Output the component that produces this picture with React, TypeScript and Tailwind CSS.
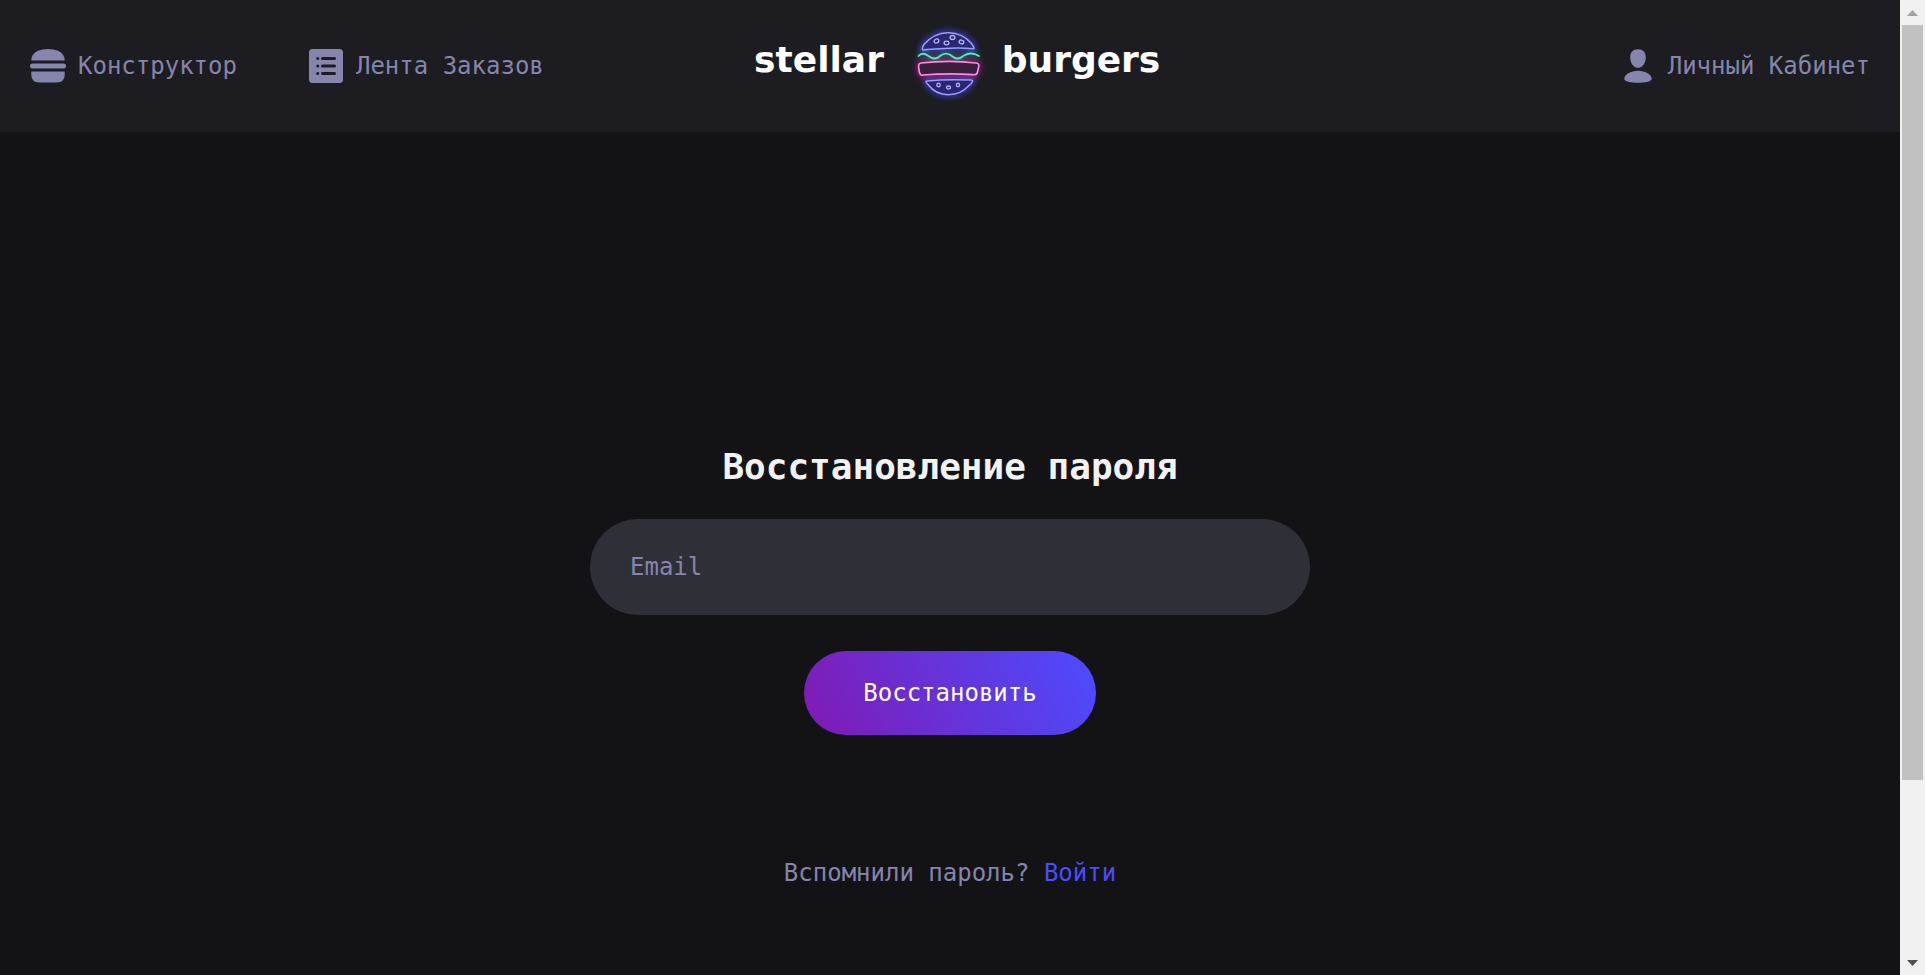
import React from "react";

function BurgerIcon() {
  return (
    <svg className="size-9" viewBox="0 0 36 36" fill="#8585AD" aria-hidden="true">
      <path d="M18 1C9 1 1.3 4.400 1.300 12.600H34.700C34.700 4.400 27 1 18 1Z" />
      <rect x="0" y="15.500" width="36" height="5" rx="2.500" />
      <path d="M1.300 23.500H34.700V26.500Q34.700 34.500 26.500 34.500H9.500Q1.300 34.500 1.300 26.500Z" />
    </svg>
  );
}

function ListIcon() {
  return (
    <svg className="size-9" viewBox="0 0 36 36" aria-hidden="true">
      <rect x="1" y="1" width="34" height="34" rx="3.500" fill="#8585AD" />
      <g stroke="#1C1C21" strokeWidth="3" strokeLinecap="round">
        <path d="M9.700 10.500h.1M14.500 10.500h12M9.700 18h.1M14.500 18h12M9.700 25.500h.1M14.500 25.500h12" />
      </g>
    </svg>
  );
}

function ProfileIcon() {
  return (
    <svg className="size-9" viewBox="0 0 36 36" fill="#8585AD" aria-hidden="true">
      <path d="M18 1.200c5 0 7.800 3 7.800 8 0 6-3.400 10.600-7.800 10.600S10.200 15.200 10.200 9.200c0-5 2.800-8 7.800-8Z" />
      <path d="M18 22.700c7.500 0 13.700 4 13.700 8 0 2.600-6 4-13.700 4s-13.700-1.400-13.700-4c0-4 6.200-8 13.700-8Z" />
    </svg>
  );
}

function NeonBurger() {
  return (
    <svg className="h-20 w-[78px] shrink-0" viewBox="1 0 78 80" fill="none" aria-hidden="true">
      <defs>
        <filter id="glow" x="-30%" y="-30%" width="160%" height="160%">
          <feGaussianBlur stdDeviation="3" />
        </filter>
        <g id="bun">
          <path d="M13 26C11.500 25.500 12.500 23 14 20.500C27 5 49 5 61 19C63 22 65 24.500 63.500 24.800C46 22.500 29 24.500 13 26Z" />
          <path d="M17 57C31 55.500 49 55.500 61 56C64 56 62 59 59.500 61C48 74 28 74 18 60.500C15.500 58 15.500 57 17 57Z" />
        </g>
        <path id="lettuce" d="M8.500 32C11 29 15 29.500 18.500 32C23 35.500 27 35 30 32C34 28.500 39 29 42.500 32.500C46 35.500 50 35 54 31.500C59 28.500 64 29 69 32" />
        <path id="patty" d="M11 39C29 37 49 37 66 39C69 39.500 69 40.500 68.800 42C68.500 44 68 46.500 67.300 48.500C66.800 50.500 65.500 51 63 50.700C46 49.400 29 49.700 13 51C10.500 51.500 9.500 50 9 46C8.300 42.500 8 39.500 11 39Z" />
      </defs>
      <g filter="url(#glow)" strokeWidth="4">
        <use href="#bun" stroke="#4242DE" />
        <use href="#lettuce" stroke="#008C86" strokeOpacity=".6" />
        <use href="#patty" stroke="#C31DA0" strokeOpacity=".8" />
      </g>
      <use href="#bun" fill="#292770" stroke="#9C9CFF" strokeWidth="1.500" />
      <g stroke="#B5B5FF" strokeWidth="1.300">
        <ellipse cx="26.500" cy="17" rx="2.400" ry="1.900" transform="rotate(-25 26.500 17)" />
        <ellipse cx="36.500" cy="19" rx="2.400" ry="1.800" />
        <ellipse cx="42.500" cy="13.500" rx="2.400" ry="2" />
        <ellipse cx="51.500" cy="18" rx="2.400" ry="1.800" transform="rotate(20 51.500 18)" />
        <ellipse cx="28.500" cy="61" rx="1.700" ry="1.800" />
        <ellipse cx="38.500" cy="63.500" rx="2" ry="1.500" />
        <ellipse cx="48" cy="61" rx="1.600" ry="1.800" />
      </g>
      <use href="#lettuce" stroke="#55E8D0" strokeWidth="1.800" strokeLinecap="round" />
      <use href="#patty" fill="#3B1D3C" stroke="#FF8ADF" strokeWidth="1.700" />
    </svg>
  );
}

function NavLink({ icon, children }: { icon: React.ReactNode; children: React.ReactNode }) {
  return (
    <a href="#" className="flex items-center gap-3 whitespace-nowrap">
      {icon}
      <span>{children}</span>
    </a>
  );
}

function Header() {
  return (
    <header className="grid grid-cols-[1fr_auto_1fr] items-center bg-[#1c1c21] px-[30px] py-6 text-[#8585ad]">
      <nav className="flex gap-[71px]">
        <NavLink icon={<BurgerIcon />}>Конструктор</NavLink>
        <NavLink icon={<ListIcon />}>Лента Заказов</NavLink>
      </nav>
      <a
        href="#"
        aria-label="stellar burgers"
        className="grid grid-cols-[176px_auto_176px] items-center gap-1 pb-1 text-center font-['DejaVu_Sans'] text-4xl leading-10 font-bold text-white"
      >
        <span className="pb-2">stellar</span>
        <NeonBurger />
        <span className="pb-2">burgers</span>
      </a>
      <nav className="flex justify-end">
        <NavLink icon={<ProfileIcon />}>Личный Кабинет</NavLink>
      </nav>
    </header>
  );
}

function Scrollbar() {
  return (
    <div className="flex w-[25px] shrink-0 flex-col bg-[#f1f1f1] px-[2px]" aria-hidden="true">
      <div className="flex h-[25px] items-center justify-center">
        <svg className="h-[6px] w-[11px]" viewBox="0 0 11 6" fill="#a3a3a3"><path d="M0 6 5.500 0 11 6Z" /></svg>
      </div>
      <div className="flex-1">
        <div className="h-[81.6%] bg-[#c1c1c1]" />
      </div>
      <div className="flex h-[25px] items-center justify-center">
        <svg className="h-[6px] w-[11px]" viewBox="0 0 11 6" fill="#505050"><path d="M0 0 5.500 6 11 0Z" /></svg>
      </div>
    </div>
  );
}

export default function App() {
  return (
    <div className="flex min-h-screen bg-[#131316] font-['DejaVu_Sans_Mono',monospace] text-2xl leading-8">
      <div className="flex min-w-0 flex-1 flex-col">
        <Header />
        <main className="flex flex-1 flex-col items-center pt-[315px]">
          <form className="flex w-full max-w-[720px] flex-col items-center" onSubmit={(e) => e.preventDefault()}>
            <h1 className="text-4xl leading-10 font-bold text-[#f2f2f3]">Восстановление пароля</h1>
            <input
              type="email"
              aria-label="Email"
              placeholder="Email"
              className="mt-8 h-24 w-full rounded-full bg-[#2f2f37] px-10 text-[#f2f2f3] outline-none placeholder:text-[#8585ad]"
            />
            <button type="submit" className="mt-9 rounded-full bg-[linear-gradient(63deg,#801ab3_0%,#4c4cff_100%)] px-[59px] py-[26px] text-white">
              Восстановить
            </button>
          </form>
          <p className="mt-[122px] text-[#8585ad]">
            Вспомнили пароль? <a href="#" className="text-[#4c4cff]">Войти</a>
          </p>
        </main>
      </div>
      <Scrollbar />
    </div>
  );
}
